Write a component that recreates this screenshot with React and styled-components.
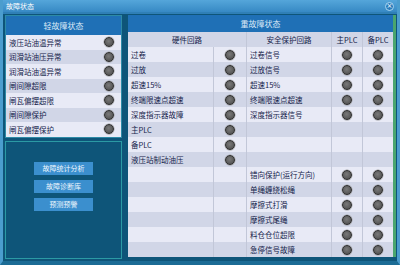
import styled, { createGlobalStyle } from "styled-components";

const Global = createGlobalStyle`
  html, body {
    margin: 0;
    padding: 0;
    background: #0f5a80;
  }
  * { box-sizing: border-box; }
`

const Window = styled.div`
  width: 400px;
  height: 265px;
  display: flex;
  flex-direction: column;
  background: #0e5579;
  border-left: 3px solid #4b9dce;
  border-right: 3px solid #4b9dce;
  border-bottom: 4px solid #1c6c95;
  font-family: "Noto Sans CJK SC", "Noto Sans", sans-serif;
  overflow: hidden;
`

const TitleBar = styled.div`
  height: 14px;
  margin: 0 -3px;
  padding: 0 6px;
  display: flex;
  align-items: center;
  justify-content: space-between;
  background: linear-gradient(180deg, #55a6da 0%, #3789c4 100%);
  border-bottom: 2px solid #2f7fb6;
  color: #fff;
  font-size: 7px;
`

const Close = styled.div`
  width: 9px;
  height: 9px;
  border-radius: 50%;
  background: #2b7dbb;
  border: 1px solid #a9d6f2;
  color: #fff;
  font-size: 7px;
  line-height: 7px;
  text-align: center;
  font-family: "DejaVu Sans", sans-serif;
`

const Body = styled.div`
  flex: 1;
  display: flex;
  gap: 6px;
  padding: 1px 0 0 2px;
`

const LeftCol = styled.div`
  width: 117px;
  display: flex;
  flex-direction: column;
  gap: 3px;
  padding-bottom: 2px;
`

const Panel = styled.div`
  border: 1px solid #2d8aa6;
  background: #e7e9f5;
  display: flex;
  flex-direction: column;
`

const Header = styled.div`
  height: ${p => p.$h}px;
  background: #1f70b6;
  color: #dbe9f7;
  font-size: 8px;
  display: flex;
  align-items: center;
  justify-content: center;
`

const Row = styled.div`
  height: 14.5px;
  display: flex;
  align-items: center;
  padding: 0 7px 0 3px;
  background: ${p => (p.$alt ? "#d1d6e7" : "#e8eaf6")};
  color: #14224a;
  font-size: 7.5px;
`

const Label = styled.span`
  flex: 1;
`

const Lamp = styled.span`
  width: 10px;
  height: 10px;
  border-radius: 50%;
  display: inline-block;
  background: radial-gradient(circle at 45% 40%, #7a7a7a 0%, #5c5c5c 60%, #4a4a4a 100%);
  border: 1px solid #2e2e2e;
  box-shadow: 0 0 0 0.5px #9a9a9a;
`

const ToolPanel = styled.div`
  flex: 1;
  border: 1px solid #2b9aa4;
  display: flex;
  flex-direction: column;
  align-items: center;
  padding-top: 20px;
  gap: 5px;
`

const Button = styled.div`
  width: 59px;
  height: 13px;
  background: #3b8fce;
  color: #eef6fd;
  font-size: 7px;
  display: flex;
  align-items: center;
  justify-content: center;
`

const RightPanel = styled.div`
  width: 268px;
  margin-bottom: 4px;
  border-right: 3px solid #4aa56e;
  display: flex;
  flex-direction: column;
  background: #e7e9f5;
`

const Grid = styled.div`
  flex: 1;
  display: grid;
  grid-template-columns: 85px 33px 85px 31px 31px;
  grid-auto-rows: 1fr;
`

const Cell = styled.div`
  display: flex;
  align-items: center;
  justify-content: ${p => (p.$center ? "center" : "flex-start")};
  padding-left: ${p => (p.$center ? 0 : 3)}px;
  background: ${p => (p.$alt ? "#d1d6e7" : "#e8eaf6")};
  border-left: ${p => (p.$line ? "1px solid #c2c7d8" : "none")};
  color: #14224a;
  font-size: 7.5px;
  grid-column: ${p => p.$span || "auto"};
`

const leftItems = [
  "液压站油温异常",
  "润滑站油压异常",
  "润滑站油温异常",
  "闸间隙超限",
  "闸瓦偏摆超限",
  "闸间隙保护",
  "闸瓦偏摆保护",
]

const rows = [
  ["过卷", "过卷信号"],
  ["过放", "过放信号"],
  ["超速15%", "超速15%"],
  ["终端限速点超速", "终端限速点超速"],
  ["深度指示器故障", "深度指示器信号"],
  ["主PLC", null],
  ["备PLC", null],
  ["液压站制动油压", null],
  [null, "错向保护(运行方向)"],
  [null, "单绳缠绕松绳"],
  [null, "摩擦式打滑"],
  [null, "摩擦式尾绳"],
  [null, "料仓仓位超限"],
  [null, "急停信号故障"],
]

const App = () => {
  return (
    <Window>
      <Global />
      <TitleBar>
        <span>故障状态</span>
        <Close>×</Close>
      </TitleBar>
      <Body>
        <LeftCol>
          <Panel>
            <Header $h={19}>轻故障状态</Header>
            {leftItems.map((t, i) => (
              <Row key={t} $alt={i % 2 === 1}>
                <Label>{t}</Label>
                <Lamp />
              </Row>
            ))}
          </Panel>
          <ToolPanel>
            <Button>故障统计分析</Button>
            <Button>故障诊断库</Button>
            <Button>预测预警</Button>
          </ToolPanel>
        </LeftCol>
        <RightPanel>
          <Header $h={17}>重故障状态</Header>
          <Grid>
            <Cell $center $alt $span="span 2">硬件回路</Cell>
            <Cell $center $alt $line>安全保护回路</Cell>
            <Cell $center $alt $line>主PLC</Cell>
            <Cell $center $alt $line>备PLC</Cell>
            {rows.map(([hw, safe], i) => {
              const alt = i % 2 === 1
              return [
                <Cell key={`a${i}`} $alt={alt}>{hw}</Cell>,
                <Cell key={`b${i}`} $alt={alt} $center $line>{hw && <Lamp />}</Cell>,
                <Cell key={`c${i}`} $alt={alt} $line>{safe}</Cell>,
                <Cell key={`d${i}`} $alt={alt} $center $line>{safe && <Lamp />}</Cell>,
                <Cell key={`e${i}`} $alt={alt} $center $line>{safe && <Lamp />}</Cell>,
              ]
            })}
          </Grid>
        </RightPanel>
      </Body>
    </Window>
  )
}

export default App
